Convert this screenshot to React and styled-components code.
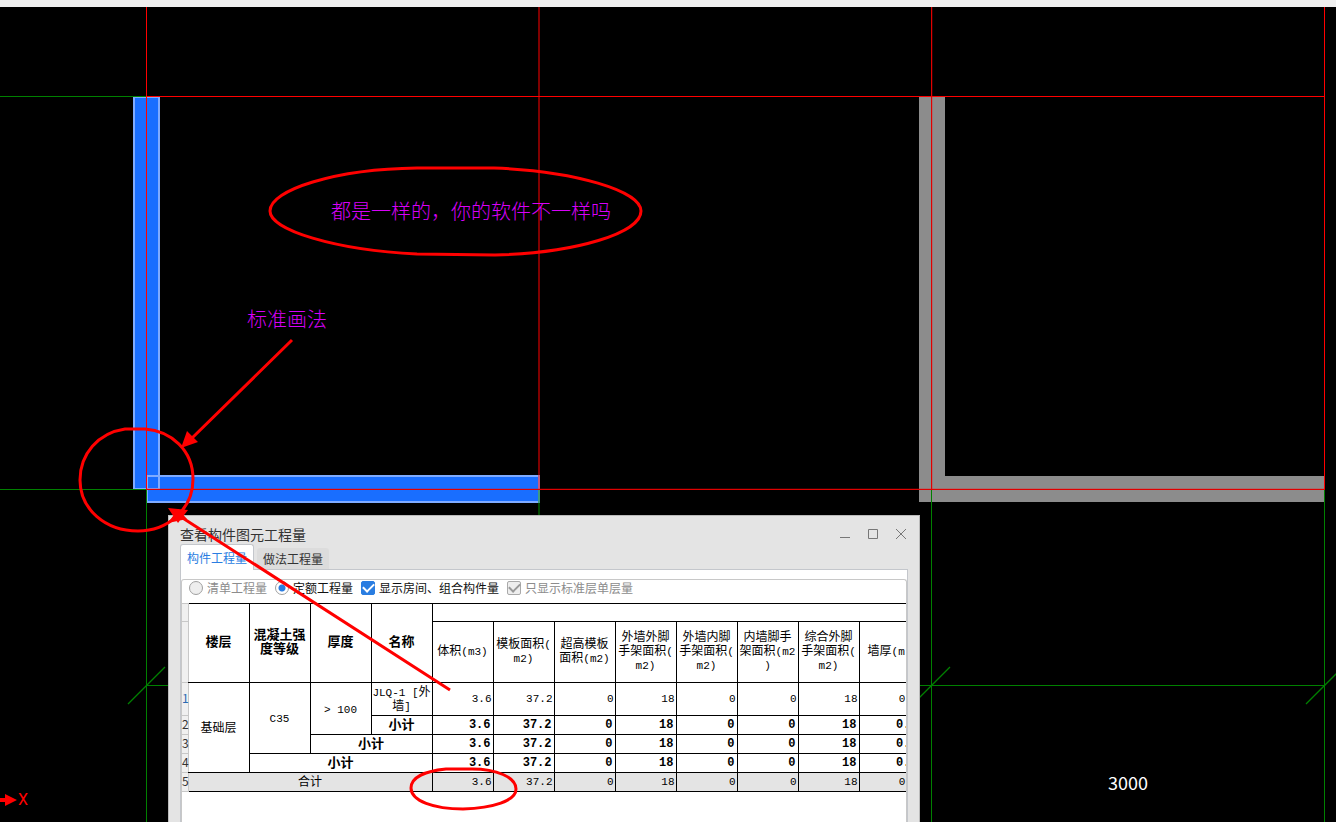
import { Fragment } from "react";
import styled, { createGlobalStyle } from "styled-components";

const COLUMNS = [
  ["体积", "(m3)"],
  ["模板面积", "(\nm2)"],
  ["超高模板\n面积", "(m2)"],
  ["外墙外脚\n手架面积", "(\nm2)"],
  ["外墙内脚\n手架面积", "(\nm2)"],
  ["内墙脚手\n架面积", "(m2\n)"],
  ["综合外脚\n手架面积", "(\nm2)"],
  ["墙厚", "(m)"],
];

const VALUES = ["3.6", "37.2", "0", "18", "0", "0", "18", "0.2"];

const Values = ({ bold }) => VALUES.map((value, i) => (
  <NumberCell key={i} $bold={bold}>{value}</NumberCell>
));

const Drawing = () => (
  <Layer aria-hidden="true">
    <g shapeRendering="crispEdges">
      <path d="M919 89h26v380h379v26H919z" fill="#8c8c8c" />
      <path d="M133 89h27v393h-27z" fill="#196eff" />
      <path d="M147 469h392v26H147z" fill="#196eff" />
      <g fill="none" stroke="#7fabff" strokeWidth="2">
        <path d="M134 90h25v392h-25z" />
        <path d="M147 469h392v26H147z" />
      </g>
      <g fill="#008000">
        <rect x="0" y="89" width="146" height="1" />
        <rect x="0" y="482" width="146" height="1" />
        <rect x="146" y="678" width="1179" height="1" />
        <rect x="146" y="483" width="1" height="400" />
        <rect x="931" y="483" width="1" height="400" />
        <rect x="1324" y="483" width="1" height="400" />
      </g>
      <rect x="538" y="0" width="2" height="468" fill="#800000" />
      <rect x="538" y="468" width="2" height="14" fill="#c45c80" />
      <rect x="538" y="483" width="2" height="13" fill="#409a80" />
      <rect x="538" y="496" width="2" height="13" fill="#004800" />
      <g fill="#f00">
        <rect x="146" y="0" width="1" height="482" />
        <rect x="1324" y="0" width="1" height="482" />
        <rect x="146" y="89" width="1179" height="1" />
      </g>
      <g fill="#e00000">
        <rect x="931" y="0" width="1" height="482" />
        <rect x="146" y="482" width="1179" height="1" />
      </g>
      <g fill="#f00" fillOpacity="0.2">
        <rect x="932" y="0" width="1" height="482" />
        <rect x="146" y="481" width="1179" height="1" />
      </g>
    </g>
    <path d="M128 697l37-37M913 697l37-37M1306 697l37-37" fill="none" stroke="#008000" strokeWidth="1.3" />
    <path d="M0 791h5v-4l12 6-12 6v-4H0z" fill="#f00" />
  </Layer>
);

const Markup = () => (
  <Layer aria-hidden="true">
    <g fill="none" stroke="#f00" strokeWidth="3">
      <path d="M417 161h77C575 164 641 184 641 204C641 226 576 246 495 248L417 247C335 243 270 223 270 204C270 183 335 162 417 161z" />
      <path d="M125 422h20C171 424 193 443 193 472C193 503 167 524 138 524C105 524 80 502 80 473C80 447 98 426 125 422z" />
      <path d="M446 762h26C496 762 516 770 516 782C516 794 493 801 463 802C434 802 411 794 411 781C411 770 426 764 446 762z" />
      <path d="M292 333L190 433M450 683L178 508" />
    </g>
    <path d="M181 441l6-17 11 11zM168 501l20 2-10 13zM168 516l10-14 9 10z" fill="#f00" />
  </Layer>
);

const QuantityTable = () => (
  <Grid>
    <colgroup>
      <IndexCol />
      {Array.from({ length: 12 }, (_, i) => <DataCol key={i} />)}
    </colgroup>
    <thead>
      <Row $height={18}>
        <IndexCell />
        <HeadCell rowSpan={2} $edge>楼层</HeadCell>
        <HeadCell rowSpan={2}>{"混凝土强\n度等级"}</HeadCell>
        <HeadCell rowSpan={2}>厚度</HeadCell>
        <HeadCell rowSpan={2}>名称</HeadCell>
        <HeadCell colSpan={8} />
      </Row>
      <Row $height={61}>
        <IndexCell />
        {COLUMNS.map(([name, unit]) => (
          <UnitHead key={name}>{name}<Mono>{unit}</Mono></UnitHead>
        ))}
      </Row>
    </thead>
    <tbody>
      <Row $height={33}>
        <IndexCell $active>1</IndexCell>
        <Cell rowSpan={4} $edge>基础层</Cell>
        <Cell rowSpan={3}><Mono>C35</Mono></Cell>
        <Cell rowSpan={2}><Mono>&gt; 100</Mono></Cell>
        <Cell><Mono>JLQ-1 [</Mono>外{"\n"}墙<Mono>]</Mono></Cell>
        <Values />
      </Row>
      <Row $height={19}>
        <IndexCell>2</IndexCell>
        <Cell $bold>小计</Cell>
        <Values bold />
      </Row>
      <Row $height={19}>
        <IndexCell>3</IndexCell>
        <Cell $bold colSpan={2}>小计</Cell>
        <Values bold />
      </Row>
      <Row $height={19}>
        <IndexCell>4</IndexCell>
        <Cell $bold colSpan={3}>小计</Cell>
        <Values bold />
      </Row>
      <Row $height={19} $total>
        <IndexCell>5</IndexCell>
        <Cell colSpan={4} $edge>合计</Cell>
        <Values />
      </Row>
    </tbody>
  </Grid>
);

const QuantityDialog = () => (
  <Dialog role="dialog" aria-label="查看构件图元工程量">
    <TitleBar>
      <Title>查看构件图元工程量</Title>
      <WindowButtons>
        <WindowButton aria-label="最小化">
          <svg width="12" height="12"><path d="M1 9.5h10" /></svg>
        </WindowButton>
        <WindowButton aria-label="最大化">
          <svg width="12" height="12"><path d="M1.5 1.5h9v9h-9z" /></svg>
        </WindowButton>
        <WindowButton aria-label="关闭">
          <svg width="12" height="12"><path d="M1 1l10 10M11 1L1 11" /></svg>
        </WindowButton>
      </WindowButtons>
    </TitleBar>
    <Tabs role="tablist">
      <Tab role="tab" aria-selected="true" $active>构件工程量</Tab>
      <Tab role="tab" aria-selected="false">做法工程量</Tab>
    </Tabs>
    <Pane>
      <Group>
        <Options>
          <Option $muted>
            <Radio name="mode" disabled />
            清单工程量
          </Option>
          <Option>
            <Radio name="mode" defaultChecked />
            定额工程量
          </Option>
          <Option>
            <CheckBox defaultChecked />
            显示房间、组合构件量
          </Option>
          <Option $muted>
            <CheckBox defaultChecked disabled />
            只显示标准层单层量
          </Option>
        </Options>
        <TableView>
          <QuantityTable />
        </TableView>
      </Group>
    </Pane>
  </Dialog>
);

const App = () => {

  return (
      <Fragment>
          <GlobalStyle/>
          <Screen>
              <TopStrip/>
              <Canvas>
                  <Drawing/>
                  <Note $x={331} $y={189}>都是一样的，你的软件不一样吗</Note>
                  <Note $x={247} $y={297}>标准画法</Note>
                  <Dimension>3000</Dimension>
                  <AxisLabel>X</AxisLabel>
                  <QuantityDialog/>
                  <Markup/>
              </Canvas>
          </Screen>
      </Fragment>
  )

}
export default App;

const GlobalStyle = createGlobalStyle`
  * {
    box-sizing: border-box;
  }
  body {
    margin: 0;
    background: #000;
    font-family: "Noto Sans CJK SC", sans-serif;
  }
`;

const Screen = styled.div`
  display: flex;
  flex-direction: column;
  height: 100vh;
`;

const TopStrip = styled.div`
  flex: none;
  height: 7px;
  background: #f0f0f0;
`;

const Canvas = styled.main`
  position: relative;
  flex: 1;
  overflow: hidden;
  background: #000;
`;

const Layer = styled.svg`
  position: absolute;
  inset: 0;
  width: 100%;
  height: 100%;
  pointer-events: none;
`;

const Note = styled.div`
  position: absolute;
  left: ${({ $x }) => $x}px;
  top: ${({ $y }) => $y}px;
  font-size: 20px;
  font-weight: 300;
  line-height: 30px;
  color: #d800f8;
  white-space: nowrap;
`;

const Dimension = styled.div`
  position: absolute;
  left: 1108px;
  top: 763px;
  font-size: 18px;
  line-height: 24px;
  color: #fff;
`;

const AxisLabel = styled.div`
  position: absolute;
  left: 18px;
  top: 783px;
  font: 16px/20px Roboto, sans-serif;
  color: #f00;
`;

const Dialog = styled.section`
  position: absolute;
  isolation: isolate;
  left: 168px;
  top: 508px;
  bottom: 0;
  width: 752px;
  display: flex;
  flex-direction: column;
  padding: 0 11px;
  border: 1px solid #bbb;
  border-bottom: 0;
  background: #e4e4e4;
`;

const TitleBar = styled.header`
  display: flex;
  justify-content: space-between;
  height: 28px;
  padding: 8px 1px 0 0;
`;

const Title = styled.h1`
  margin: 0;
  font-size: 14px;
  font-weight: 400;
  line-height: 20px;
  color: #333;
`;

const WindowButtons = styled.div`
  display: flex;
  align-items: center;
  gap: 16px;
`;

const WindowButton = styled.button`
  display: flex;
  padding: 0;
  border: 0;
  background: none;

  path {
    fill: none;
    stroke: #777;
  }
`;

const Tabs = styled.div`
  display: flex;
  align-items: flex-end;
  gap: 3px;
  height: 25px;
`;

const Tab = styled.button`
  height: ${({ $active }) => ($active ? 26 : 21)}px;
  margin-bottom: ${({ $active }) => ($active ? -1 : 0)}px;
  padding: 0 6px;
  border: ${({ $active }) => ($active ? "1px solid #c4c7cc" : "0")};
  border-bottom: 0;
  border-radius: 3px 3px 0 0;
  background: ${({ $active }) => ($active ? "#fff" : "#dcdcdc")};
  color: ${({ $active }) => ($active ? "#2a7de1" : "#333")};
  font: 12px/18px "Noto Sans CJK SC", sans-serif;
  z-index: 1;
`;

const Pane = styled.div`
  flex: 1;
  display: flex;
  padding-top: 9px;
  border: 1px solid #c4c7cc;
  border-bottom: 0;
  background: #fff;
`;

const Group = styled.div`
  flex: 1;
  min-width: 0;
  display: flex;
  flex-direction: column;
  border: 1px solid #c8c8c8;
  border-bottom: 0;
  border-radius: 3px 3px 0 0;
`;

const Options = styled.div`
  display: flex;
  align-items: center;
  gap: 8px;
  height: 23px;
  padding: 0 7px 7px;
`;

const Option = styled.label`
  display: flex;
  align-items: center;
  gap: 4px;
  font-size: 12px;
  line-height: 18px;
  color: ${({ $muted }) => ($muted ? "#8c8c8c" : "#111")};
  white-space: nowrap;
`;

const Radio = styled.input.attrs({ type: "radio" })`
  appearance: none;
  width: 14px;
  height: 14px;
  margin: 0;
  border: 1px solid #a0a0a0;
  border-radius: 50%;
  background: #fff;

  &:checked {
    background: radial-gradient(circle, #2a7de1 3px, #fff 4px);
  }
  &:disabled {
    background: #eee;
  }
`;

const CheckBox = styled.input.attrs({ type: "checkbox" })`
  appearance: none;
  display: grid;
  place-items: center;
  width: 14px;
  height: 14px;
  margin: 0;
  border: 1px solid #2a7de1;
  border-radius: 2px;
  background: #2a7de1;
  color: #fff;

  &::before {
    content: "";
    width: 9px;
    height: 5px;
    margin-bottom: 3px;
    border-left: 2px solid currentColor;
    border-bottom: 2px solid currentColor;
    transform: rotate(-45deg);
  }
  &:disabled {
    border-color: #aaa;
    background: #eee;
    color: #999;
  }
`;

const TableView = styled.div`
  flex: 1;
  overflow: hidden;
`;

const Grid = styled.table`
  width: 738px;
  table-layout: fixed;
  border-collapse: collapse;
`;

const IndexCol = styled.col`
  width: 6px;
`;

const DataCol = styled.col`
  width: 61px;
`;

const Row = styled.tr`
  height: ${({ $height }) => $height}px;
  background: ${({ $total }) => ($total ? "#e4e4e4" : "#fff")};
`;

const Cell = styled.td`
  padding: 0 0 2px;
  border: 1px solid #000;
  border-left-color: ${({ $edge }) => ($edge ? "#c8c8c8" : "#000")};
  font-size: ${({ $bold }) => ($bold ? 13 : 12)}px;
  font-weight: ${({ $bold }) => ($bold ? 700 : 400)};
  line-height: 14px;
  color: #000;
  text-align: center;
  white-space: pre;
`;

const HeadCell = styled(Cell).attrs({ as: "th", $bold: true })`
  padding-bottom: 4px;
`;

const UnitHead = styled(Cell).attrs({ as: "th" })`
  padding-bottom: 4px;
`;

const NumberCell = styled(Cell)`
  padding: 0 ${({ $bold }) => ($bold ? 2 : 1)}px 1px 0;
  font-family: "Liberation Mono", monospace;
  font-size: ${({ $bold }) => ($bold ? 12 : 11)}px;
  text-align: right;
`;

const IndexCell = styled(Cell).attrs({ as: "th" })`
  border-color: #c8c8c8;
  border-left: 0;
  background: #f0f0f0;
  color: ${({ $active }) => ($active ? "#2a6ab0" : "#333")};
`;

const Mono = styled.span`
  font-family: "Liberation Mono", monospace;
  font-size: 11px;
  line-height: 0;
`;
